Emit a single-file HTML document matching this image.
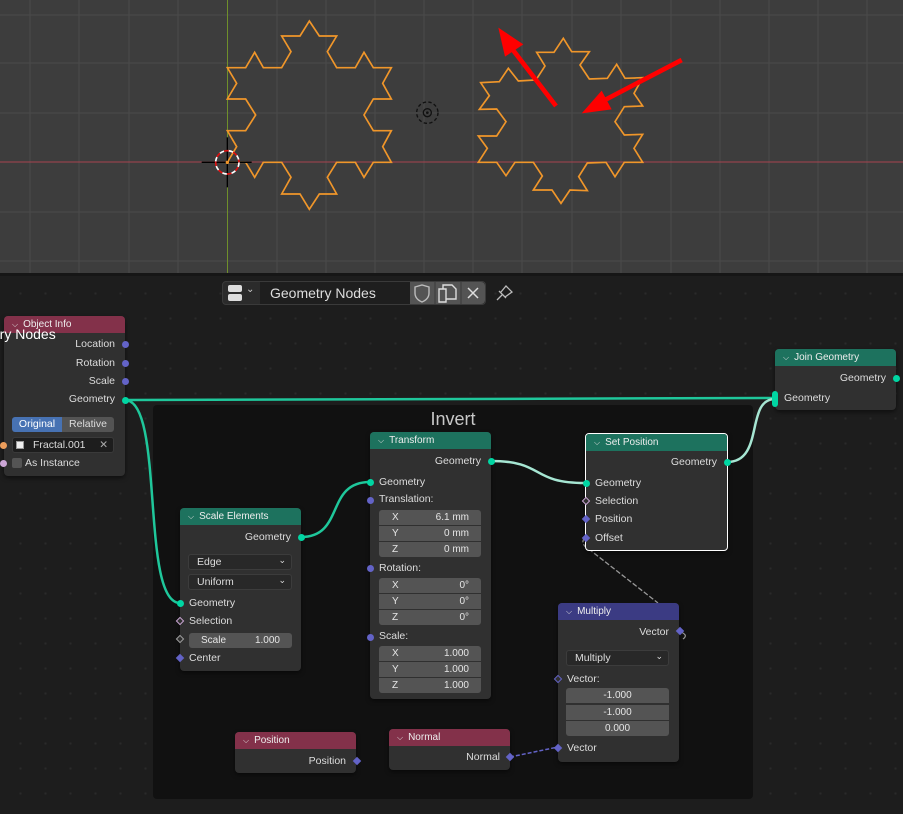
<!DOCTYPE html>
<html><head><meta charset="utf-8"><style>
*{margin:0;padding:0;box-sizing:border-box}
body{width:903px;height:814px;overflow:hidden;background:#1d1d1d;font-family:"Liberation Sans",sans-serif;position:relative}
.vp{position:absolute;left:0;top:0;width:903px;height:273px;background:#3d3d3d;overflow:hidden}
.ne{position:absolute;left:0;top:273px;width:903px;height:541px;background:#1d1d1d;
background-image:radial-gradient(circle,#2a2a2a 1px,transparent 1.3px);background-size:25px 25px;background-position:8px 8px}
.frame{position:absolute;left:153px;top:405px;width:600px;height:394px;background:#111;border-radius:4px}
.node{position:absolute;background:#303030;border-radius:4px;box-shadow:0 2px 4px rgba(0,0,0,.5);font-size:10.5px;color:#ddd}
.hd{height:17px;border-radius:4px 4px 0 0;color:#eee;font-size:10px;line-height:17px;padding-left:8px}
.hd:before{content:"\2335";font-size:8px;margin-right:5px;color:#ddd}
.r{position:absolute;white-space:nowrap}
.rt{text-align:right}
.s{position:absolute;width:7px;height:7px;border-radius:50%;margin:-3.5px 0 0 -3.5px}
.g{background:#00d6a3}
.v{background:#6363c7}
.d{position:absolute;width:6px;height:6px;transform:rotate(45deg);margin:-3px 0 0 -3px;background:#6363c7}
.fld{position:absolute;background:#545454;height:15px;line-height:15px;color:#e6e6e6;font-size:10px}
.dd{position:absolute;background:#282828;border:1px solid #3c3c3c;border-radius:3px;height:16px;line-height:14px;padding-left:8px;color:#ddd}
.dd:after{content:"\2304";position:absolute;right:5px;top:-2px;font-size:9px}
.green{background:#1d725e}.maroon{background:#83314a}.blue{background:#3b3b83}
</style></head><body>
<div class="vp">
<svg width="903" height="273" style="position:absolute;left:0;top:0">
<g stroke="#4a4a4a" stroke-width="1">
<line x1="30" y1="0" x2="30" y2="273"/><line x1="79" y1="0" x2="79" y2="273"/><line x1="129" y1="0" x2="129" y2="273"/><line x1="178" y1="0" x2="178" y2="273"/><line x1="277" y1="0" x2="277" y2="273"/><line x1="326" y1="0" x2="326" y2="273"/><line x1="375" y1="0" x2="375" y2="273"/><line x1="424" y1="0" x2="424" y2="273"/><line x1="473" y1="0" x2="473" y2="273"/><line x1="522" y1="0" x2="522" y2="273"/><line x1="572" y1="0" x2="572" y2="273"/><line x1="621" y1="0" x2="621" y2="273"/><line x1="671" y1="0" x2="671" y2="273"/><line x1="720" y1="0" x2="720" y2="273"/><line x1="769" y1="0" x2="769" y2="273"/><line x1="818" y1="0" x2="818" y2="273"/><line x1="867" y1="0" x2="867" y2="273"/>
<line x1="0" y1="15" x2="903" y2="15"/><line x1="0" y1="63" x2="903" y2="63"/><line x1="0" y1="113" x2="903" y2="113"/><line x1="0" y1="212" x2="903" y2="212"/><line x1="0" y1="261" x2="903" y2="261"/>
</g>
<line x1="0" y1="162" x2="903" y2="162" stroke="#a8434f" stroke-width="1"/>
<line x1="227.5" y1="0" x2="227.5" y2="273" stroke="#6f8f2b" stroke-width="1"/>
</svg>
<svg width="520" height="270" viewBox="0 0 1560 810" style="position:absolute;left:180px;top:0">
<polygon fill="none" stroke="#f0962a" stroke-width="5" stroke-linejoin="miter" points="388,63 418,108 470,108 442,155 470,203 526,203 552,157 580,203 634,203 608,250 634,297 580,297 552,345 580,392 634,392 608,440 634,487 580,487 552,532 526,487 470,487 442,532 470,582 418,582 388,628 360,582 305,582 333,532 305,487 250,487 224,532 197,487 142,487 170,440 142,392 197,392 227,345 197,297 142,297 170,250 142,203 197,203 224,157 250,203 305,203 333,155 305,108 360,108"/>
<polygon fill="none" stroke="#f0962a" stroke-width="5" points="1150,115 1175,155 1228,155 1200,195 1228,237 1282,235 1310,193 1335,235 1388,233 1362,280 1388,318 1333,320 1305,365 1333,405 1388,403 1362,445 1388,487 1333,487 1305,530 1278,487 1222,489 1196,530 1222,572 1170,570 1143,610 1116,570 1060,570 1087,528 1060,487 1005,487 978,527 950,487 895,487 922,445 895,408 950,408 978,365 950,327 898,328 928,287 902,248 958,245 985,205 1015,243 1068,240 1095,198 1070,157 1122,157"/>
<line x1="1128" y1="318" x2="995" y2="145" stroke="#ff0000" stroke-width="14"/>
<polygon points="955,83 1030,133 975,170" fill="#ff0000"/>
<line x1="1505" y1="180" x2="1265" y2="305" stroke="#ff0000" stroke-width="14"/>
<polygon points="1205,340 1265,272 1295,328" fill="#ff0000"/>
<circle cx="742" cy="338" r="32" fill="none" stroke="#111" stroke-width="4" stroke-dasharray="10 7"/>
<circle cx="742" cy="338" r="12" fill="none" stroke="#111" stroke-width="4"/>
<circle cx="742" cy="338" r="4" fill="#111"/>
<line x1="65" y1="487" x2="215" y2="487" stroke="#000" stroke-width="4"/>
<line x1="142" y1="412" x2="142" y2="562" stroke="#000" stroke-width="4"/>
<circle cx="142" cy="487" r="35" fill="none" stroke="#fff" stroke-width="5" stroke-dasharray="14 14"/>
<circle cx="142" cy="487" r="35" fill="none" stroke="#e01010" stroke-width="5" stroke-dasharray="14 14" stroke-dashoffset="14"/>
<circle cx="142" cy="487" r="5" fill="#f0962a"/>
</svg>
</div>
<div class="ne"></div>
<div style="position:absolute;left:0;top:273px;width:903px;height:3px;background:#161616"></div>
<div class="frame"><div style="position:absolute;left:0;width:600px;top:4px;text-align:center;color:#c8c8c8;font-size:18px">Invert</div></div>

<!-- header bar -->
<div style="position:absolute;left:222px;top:281px;width:264px;height:24px;background:#2b2b2b;border:1px solid #3a3a3a;border-radius:4px"></div>
<div style="position:absolute;left:228px;top:285px;width:14px;height:7px;background:#ddd;border-radius:2px"></div>
<div style="position:absolute;left:228px;top:294px;width:14px;height:7px;background:#ddd;border-radius:2px"></div>
<div style="position:absolute;left:246px;top:284px;color:#ccc;font-size:10px">⌄</div>
<div style="position:absolute;left:260px;top:282px;width:150px;height:22px;background:#1e1e1e;color:#ddd;font-size:14px;line-height:22px;padding-left:10px">Geometry Nodes</div>
<div style="position:absolute;left:410px;top:282px;width:75px;height:22px;background:#545454;border-radius:0 4px 4px 0"></div>
<svg style="position:absolute;left:410px;top:282px" width="110" height="22">
<path d="M5 5 L12 3 L19 5 L19 11 Q19 17 12 20 Q5 17 5 11Z" fill="none" stroke="#bbb" stroke-width="1.4"/>
<line x1="25" y1="0" x2="25" y2="22" stroke="#3a3a3a"/><line x1="51" y1="0" x2="51" y2="22" stroke="#3a3a3a"/>
<path d="M29 7 L33 7 L33 3 L42 3 L46 7 L46 17 L36 17 M29 7 L29 20 L36 20 L36 7 Z" fill="none" stroke="#ddd" stroke-width="1.4"/>
<path d="M58 6 L68 16 M68 6 L58 16" stroke="#ddd" stroke-width="1.5"/>
<path d="M87 18 L92 13 M89 9 L96 16 M91 10 L96 4 L102 10 L95 15" fill="none" stroke="#bbb" stroke-width="1.3"/>
</svg>

<!-- wires -->
<svg width="903" height="814" style="position:absolute;left:0;top:0">
<path d="M125 400 L775 398" stroke="#1fc79b" stroke-width="2.5" fill="none"/>
<path d="M125 400 C165 400 140 603 180 603" stroke="#1fc79b" stroke-width="2.5" fill="none"/>
<path d="M301 537 C345 537 325 482 370 482" stroke="#1fc79b" stroke-width="2.5" fill="none"/>
<path d="M491 461 C545 461 530 483 585 483" stroke="#a6e6d3" stroke-width="2.5" fill="none"/>
<path d="M727 462 C765 462 745 399 775 399" stroke="#a6e6d3" stroke-width="2.5" fill="none"/>
<path d="M585 538 C580 542 585 548 590 550 L658 603" stroke="#999" stroke-width="1.3" stroke-dasharray="5 2" fill="none"/>
<path d="M679 631 C686 634 687 636 683 639" stroke="#999" stroke-width="1.2" fill="none"/>
<path d="M510 757 L558 747" stroke="#6363c7" stroke-width="1.5" stroke-dasharray="4 2" fill="none"/>
</svg>

<!-- Object Info -->
<div class="node" style="left:4px;top:316px;width:121px;height:160px">
<div class="hd maroon">Object Info</div>
<div class="r rt" style="right:10px;top:22px">Location</div>
<div class="r rt" style="right:10px;top:41px">Rotation</div>
<div class="r rt" style="right:10px;top:59px">Scale</div>
<div class="r rt" style="right:10px;top:77px">Geometry</div>
<div style="position:absolute;left:8px;top:101px;width:50px;height:15px;background:#4772b3;border-radius:3px 0 0 3px;text-align:center;line-height:15px;color:#fff">Original</div>
<div style="position:absolute;left:58px;top:101px;width:52px;height:15px;background:#545454;border-radius:0 3px 3px 0;text-align:center;line-height:15px">Relative</div>
<div style="position:absolute;left:8px;top:121px;width:102px;height:16px;background:#1d1d1d;border:1px solid #3a3a3a;border-radius:3px;line-height:14px;padding-left:20px">Fractal.001<span style="position:absolute;right:5px;color:#aaa">✕</span></div>
<div style="position:absolute;left:12px;top:125px;width:8px;height:8px;background:#eee;border:1px solid #999"></div>
<div style="position:absolute;left:8px;top:142px;width:10px;height:10px;background:#545454;border-radius:2px"></div>
<div class="r" style="left:21px;top:141px">As Instance</div>
</div>
<div style="position:absolute;left:-12px;top:326px;color:#fff;font-size:14px">etry Nodes</div>
<div class="s v" style="left:125px;top:344px"></div>
<div class="s v" style="left:125px;top:363px"></div>
<div class="s v" style="left:125px;top:381px"></div>
<div class="s g" style="left:125px;top:400px"></div>
<div class="s" style="left:3px;top:445px;background:#ed9e5c"></div>
<div class="s" style="left:3px;top:463px;background:#cca6d6"></div>

<!-- Join Geometry -->
<div class="node" style="left:775px;top:349px;width:121px;height:61px">
<div class="hd green">Join Geometry</div>
<div class="r rt" style="right:10px;top:23px">Geometry</div>
<div class="r" style="left:9px;top:43px">Geometry</div>
</div>
<div class="s g" style="left:896px;top:378px"></div>
<div style="position:absolute;left:772px;top:391px;width:6px;height:16px;border-radius:3px;background:#00d6a3"></div>

<!-- Scale Elements -->
<div class="node" style="left:180px;top:508px;width:121px;height:163px">
<div class="hd green">Scale Elements</div>
<div class="r rt" style="right:10px;top:23px">Geometry</div>
<div class="dd" style="left:8px;top:46px;width:104px">Edge</div>
<div class="dd" style="left:8px;top:66px;width:104px">Uniform</div>
<div class="r" style="left:9px;top:89px">Geometry</div>
<div class="r" style="left:9px;top:107px">Selection</div>
<div class="fld" style="left:9px;top:125px;width:103px;border-radius:3px"><span style="position:absolute;left:12px">Scale</span><span style="position:absolute;right:12px">1.000</span></div>
<div class="r" style="left:9px;top:144px">Center</div>
</div>
<div class="s g" style="left:301px;top:537px"></div>
<div class="s g" style="left:180px;top:603px"></div>
<div class="d" style="left:180px;top:621px;background:#303030;border:1.5px solid #cca6d6"></div>
<div class="d" style="left:180px;top:639px;background:#303030;border:1.5px solid #a1a1a1"></div>
<div class="d" style="left:180px;top:658px"></div>

<!-- Transform -->
<div class="node" style="left:370px;top:432px;width:121px;height:267px">
<div class="hd green">Transform</div>
<div class="r rt" style="right:10px;top:23px">Geometry</div>
<div class="r" style="left:9px;top:44px">Geometry</div>
<div class="r" style="left:9px;top:61px">Translation:</div>
<div class="fld" style="left:9px;top:78px;width:102px;border-radius:3px 3px 0 0"><span style="position:absolute;left:13px">X</span><span style="position:absolute;right:12px">6.1 mm</span></div>
<div class="fld" style="left:9px;top:94px;width:102px"><span style="position:absolute;left:13px">Y</span><span style="position:absolute;right:12px">0 mm</span></div>
<div class="fld" style="left:9px;top:110px;width:102px;border-radius:0 0 3px 3px"><span style="position:absolute;left:13px">Z</span><span style="position:absolute;right:12px">0 mm</span></div>
<div class="r" style="left:9px;top:130px">Rotation:</div>
<div class="fld" style="left:9px;top:146px;width:102px;border-radius:3px 3px 0 0"><span style="position:absolute;left:13px">X</span><span style="position:absolute;right:12px">0°</span></div>
<div class="fld" style="left:9px;top:162px;width:102px"><span style="position:absolute;left:13px">Y</span><span style="position:absolute;right:12px">0°</span></div>
<div class="fld" style="left:9px;top:178px;width:102px;border-radius:0 0 3px 3px"><span style="position:absolute;left:13px">Z</span><span style="position:absolute;right:12px">0°</span></div>
<div class="r" style="left:9px;top:198px">Scale:</div>
<div class="fld" style="left:9px;top:214px;width:102px;border-radius:3px 3px 0 0"><span style="position:absolute;left:13px">X</span><span style="position:absolute;right:12px">1.000</span></div>
<div class="fld" style="left:9px;top:230px;width:102px"><span style="position:absolute;left:13px">Y</span><span style="position:absolute;right:12px">1.000</span></div>
<div class="fld" style="left:9px;top:246px;width:102px;border-radius:0 0 3px 3px"><span style="position:absolute;left:13px">Z</span><span style="position:absolute;right:12px">1.000</span></div>
</div>
<div class="s g" style="left:491px;top:461px"></div>
<div class="s g" style="left:370px;top:482px"></div>
<div class="s v" style="left:370px;top:500px"></div>
<div class="s v" style="left:370px;top:568px"></div>
<div class="s v" style="left:370px;top:637px"></div>

<!-- Set Position -->
<div class="node" style="left:585px;top:433px;width:143px;height:118px;border:1px solid #fff">
<div class="hd green" style="border-radius:3px 3px 0 0">Set Position</div>
<div class="r rt" style="right:10px;top:22px">Geometry</div>
<div class="r" style="left:9px;top:43px">Geometry</div>
<div class="r" style="left:9px;top:61px">Selection</div>
<div class="r" style="left:9px;top:79px">Position</div>
<div class="r" style="left:9px;top:98px">Offset</div>
</div>
<div class="s g" style="left:727px;top:462px"></div>
<div class="s g" style="left:586px;top:483px"></div>
<div class="d" style="left:586px;top:501px;background:#303030;border:1.5px solid #cca6d6"></div>
<div class="d" style="left:586px;top:519px"></div>
<div class="d" style="left:586px;top:538px"></div>

<!-- Multiply -->
<div class="node" style="left:558px;top:603px;width:121px;height:159px">
<div class="hd blue">Multiply</div>
<div class="r rt" style="right:10px;top:23px">Vector</div>
<div class="dd" style="left:8px;top:47px;width:103px">Multiply</div>
<div class="r" style="left:9px;top:70px">Vector:</div>
<div class="fld" style="left:8px;top:85px;width:103px;border-radius:3px 3px 0 0;text-align:center">-1.000</div>
<div class="fld" style="left:8px;top:102px;width:103px;text-align:center">-1.000</div>
<div class="fld" style="left:8px;top:118px;width:103px;border-radius:0 0 3px 3px;text-align:center">0.000</div>
<div class="r" style="left:9px;top:139px">Vector</div>
</div>
<div class="d" style="left:680px;top:631px"></div>
<div class="d" style="left:558px;top:679px;background:#303030;border:1.5px solid #6363c7"></div>
<div class="d" style="left:558px;top:748px"></div>

<!-- Position -->
<div class="node" style="left:235px;top:732px;width:121px;height:41px">
<div class="hd maroon">Position</div>
<div class="r rt" style="right:10px;top:23px">Position</div>
</div>
<div class="d" style="left:357px;top:761px"></div>

<!-- Normal -->
<div class="node" style="left:389px;top:729px;width:121px;height:41px">
<div class="hd maroon">Normal</div>
<div class="r rt" style="right:10px;top:22px">Normal</div>
</div>
<div class="d" style="left:510px;top:757px"></div>
</body></html>
